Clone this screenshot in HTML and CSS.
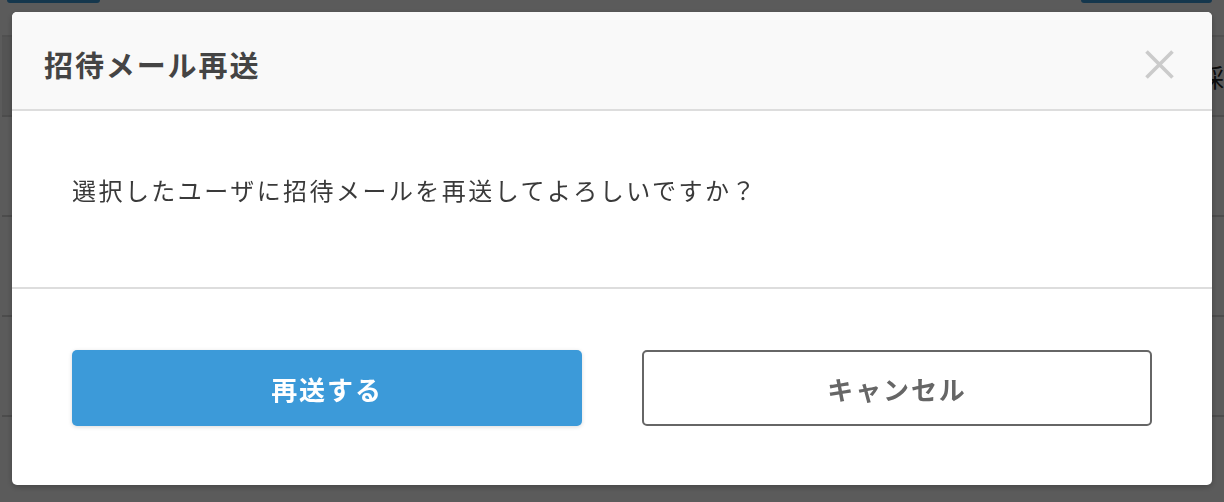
FILE: index.html
```html
<!DOCTYPE html>
<html lang="ja">
<head>
<meta charset="utf-8">
<title>招待メール再送</title>
<link rel="stylesheet" href="styles.css">
</head>
<body>
<div class="page">
  <div class="toolbar">
    <span class="tb-btn tb-left"></span>
    <span class="tb-btn tb-right"></span>
  </div>
  <div class="table">
    <div class="thead">
      <div class="th-check"></div>
      <div class="th-fill"></div>
      <div class="th-last">採</div>
    </div>
    <div class="trow"></div>
    <div class="trow"></div>
    <div class="trow"></div>
    <div class="trow"></div>
  </div>
</div>

<div class="overlay">
  <div class="modal">
    <div class="modal-header">
      <h1 class="modal-title">招待メール再送</h1>
      <button class="close" aria-label="閉じる">
        <svg width="29" height="29" viewBox="0 0 29 29">
          <path d="M1.5 1.5 L27.5 27.5 M27.5 1.5 L1.5 27.5" stroke="#cbcbcb" stroke-width="3.6" fill="none"/>
        </svg>
      </button>
    </div>
    <div class="modal-body">
      <p class="message">選択したユーザに招待メールを再送してよろしいですか？</p>
    </div>
    <div class="modal-footer">
      <button class="btn btn-primary">再送する</button>
      <button class="btn btn-cancel">キャンセル</button>
    </div>
  </div>
</div>
</body>
</html>
```

FILE: styles.css
```css
* { box-sizing: border-box; }

html, body {
  margin: 0;
  padding: 0;
}

body {
  width: 1224px;
  height: 502px;
  overflow: hidden;
  background: #ffffff;
  font-family: "Noto Sans CJK JP", "Noto Sans", sans-serif;
}

/* underlying page */
.page {
  width: 1224px;
}

.toolbar {
  display: flex;
  justify-content: space-between;
  height: 35px;
  padding: 0 12px 0 7px;
}

.tb-btn {
  display: block;
  height: 3px;
  background: #3c9ad9;
  border-radius: 0 0 5px 5px;
}

.tb-left { width: 93px; }
.tb-right { width: 131px; }

.table {
  padding-left: 2px;
}

.thead {
  display: flex;
  height: 82px;
  border-top: 2px solid #e0e0e0;
  border-bottom: 2px solid #d6d6d6;
  background: #f7f7f7;
}

.th-check {
  width: 10px;
  background: #ececec;
}

.th-fill { flex: 1; }

.th-last {
  width: 26px;
  font-size: 26px;
  line-height: 80px;
  color: #222;
}

.trow {
  height: 100px;
  border-bottom: 2px solid #d4d4d4;
}

/* overlay + modal */
.overlay {
  position: fixed;
  inset: 0;
  background: rgba(0, 0, 0, 0.645);
  padding: 12px;
}

.modal {
  width: 1200px;
  background: #ffffff;
  border-radius: 5px;
  overflow: hidden;
  box-shadow: 0 2px 6px rgba(0, 0, 0, 0.25);
}

.modal-header {
  height: 99px;
  display: flex;
  align-items: center;
  justify-content: space-between;
  padding: 7px 38px 0 32px;
  background: #f9f9f9;
  border-bottom: 2px solid #dddddd;
}

.modal-title {
  margin: 0;
  font-size: 29px;
  font-weight: 700;
  letter-spacing: 1.9px;
  color: #444444;
}

.close {
  display: flex;
  padding: 0;
  margin: 0;
  border: 0;
  background: transparent;
  cursor: pointer;
}

.modal-body {
  height: 178px;
  padding: 61px 60px 0;
  border-bottom: 2px solid #dddddd;
}

.message {
  margin: 0;
  font-size: 24px;
  line-height: 36px;
  letter-spacing: 2.45px;
  color: #3a3a3a;
}

.modal-footer {
  display: grid;
  grid-template-columns: 1fr 1fr;
  column-gap: 60px;
  padding: 61px 60px 59px;
}

.btn {
  height: 76px;
  border-radius: 5px;
  font-family: "Noto Sans CJK JP", "Noto Sans", sans-serif;
  font-size: 26px;
  font-weight: 700;
  letter-spacing: 1.9px;
  cursor: pointer;
}

.btn-primary {
  background: #3c9ad9;
  color: #ffffff;
  border: 0;
  box-shadow: 0 1px 4px rgba(0, 0, 0, 0.15);
}

.btn-cancel {
  background: #ffffff;
  color: #666666;
  border: 2px solid #666666;
}
```
